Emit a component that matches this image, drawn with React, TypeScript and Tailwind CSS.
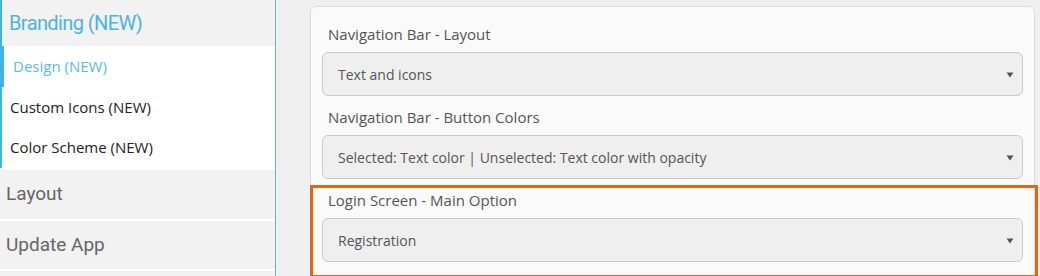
import React from "react";

const font = { fontFamily: '"Open Sans", "Noto Sans", sans-serif' };
const headFont = { fontFamily: 'Roboto, "Open Sans", sans-serif' };

function Select({ value }: { value: string }) {
  return (
    <div className="flex h-[44px] items-center justify-between rounded-[6px] border border-[#c9c9c9] bg-[#efefef] pl-[15px] pr-[8px] text-[14px] text-[#555]">
      <span>{value}</span>
      <svg width="8" height="6" viewBox="0 0 8 6" className="mt-[1px]">
        <path d="M0.5 0.5 H7.5 L4 5.5 Z" fill="#555" />
      </svg>
    </div>
  );
}

function Group({ label, value, mark }: { label: string; value: string; mark?: boolean }) {
  return (
    <div className="relative">
      {mark && (
        <div className="pointer-events-none absolute left-[-12px] right-[-15px] top-[-2px] bottom-[-16px] border-[3px] border-[#e0670f]" />
      )}
      <div className="mb-[5px] h-[26px] pl-[6px] text-[15px] leading-[26px] text-[#555]">{label}</div>
      <Select value={value} />
    </div>
  );
}

export default function App() {
  return (
    <div className="flex h-[276px] w-[1040px] overflow-hidden bg-[#efefef]" style={font}>
      <aside className="flex w-[276px] shrink-0 flex-col border-r border-[#5ab9e2] bg-white">
        <div
          className="flex h-[46px] shrink-0 items-center border-l-2 border-[#43b3e3] bg-[#f2f2f2] pb-[1px] pl-[7px] text-[20px] tracking-[-0.6px] text-[#4ab5e3]"
          style={headFont}
        >
          Branding (NEW)
        </div>
        <div className="shrink-0 border-l-2 border-[#43b3e3] bg-white">
          <div className="flex h-[41px] items-center border-l-[2px] border-[#43b3e3] pl-[9px] text-[15px] text-[#5bbbe6]">
            Design (NEW)
          </div>
          <div className="flex h-[40px] items-center pl-[8px] text-[15px] text-[#222]">Custom Icons (NEW)</div>
          <div className="flex h-[41px] items-center pl-[8px] text-[15px] text-[#222]">Color Scheme (NEW)</div>
        </div>
        <div
          className="mt-[2px] flex h-[49px] shrink-0 items-center bg-[#f2f2f2] pl-[6px] text-[19px] text-[#666]"
          style={headFont}
        >
          Layout
        </div>
        <div
          className="mt-[2px] flex h-[48px] shrink-0 items-center bg-[#f2f2f2] pl-[6px] text-[19px] text-[#666]"
          style={headFont}
        >
          Update App
        </div>
        <div className="mt-[2px] h-[20px] shrink-0 bg-[#f2f2f2]" />
      </aside>
      <main className="flex-1 pl-[34px] pr-[5px] pt-[6px]">
        <div className="h-[300px] rounded-[6px] border border-[#dcdcdc] bg-[#fafafa] px-[11px] pt-[14px]">
          <div className="flex flex-col gap-[8px]">
            <Group label="Navigation Bar - Layout" value="Text and icons" />
            <Group label="Navigation Bar - Button Colors" value="Selected: Text color | Unselected: Text color with opacity" />
            <Group label="Login Screen - Main Option" value="Registration" mark />
          </div>
        </div>
      </main>
    </div>
  );
}
